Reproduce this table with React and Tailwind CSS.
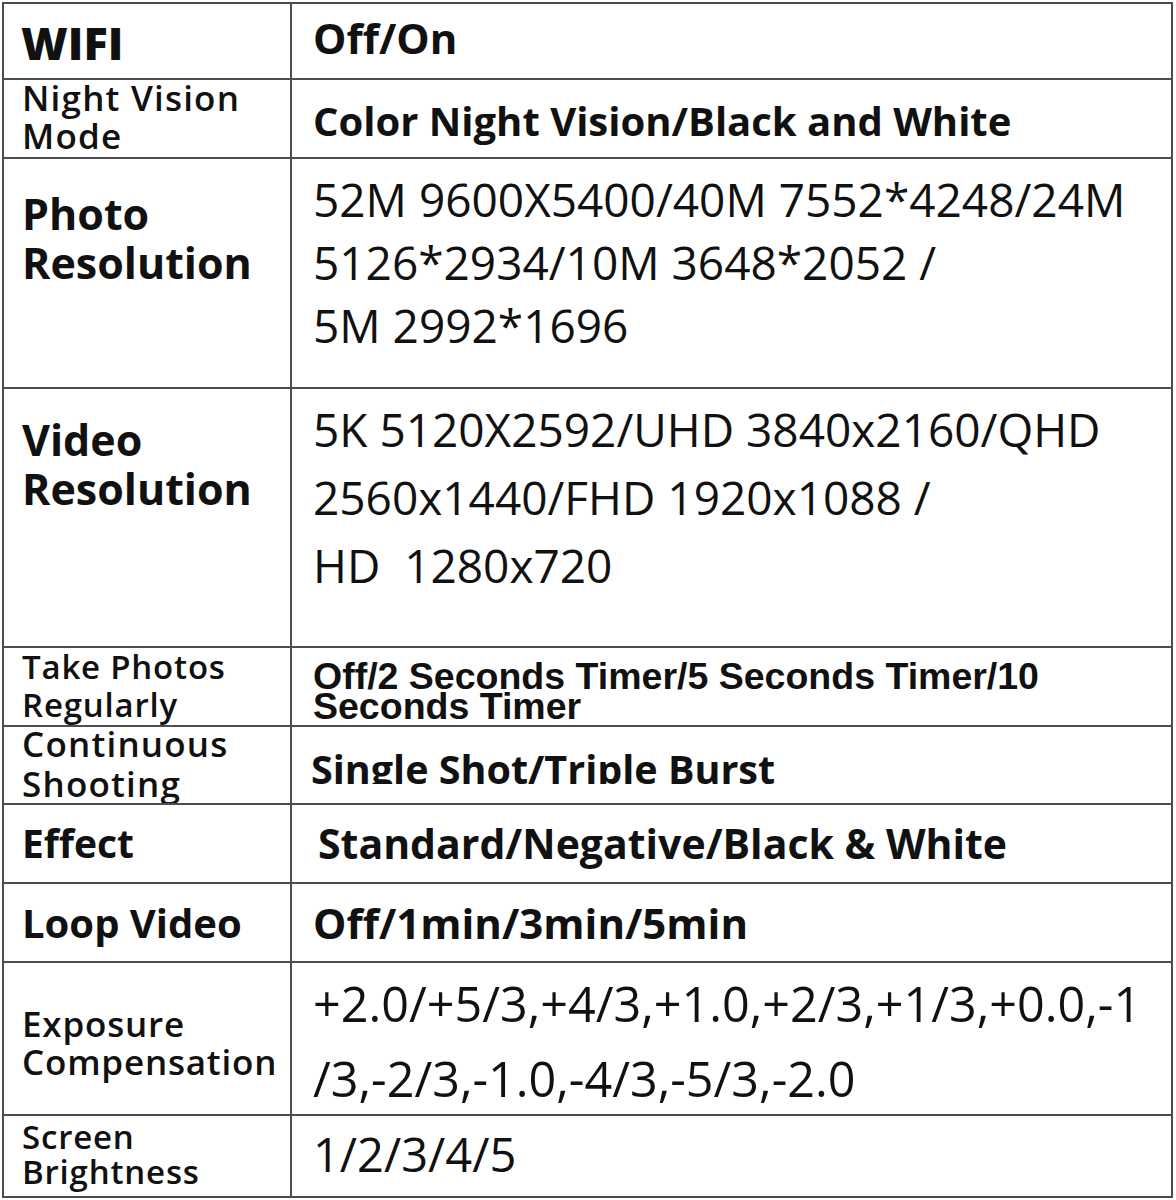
export default function App() {
  const os = { fontFamily: '"Open Sans", "Noto Sans", sans-serif' };
  const ar = { fontFamily: '"Liberation Sans", Arial, sans-serif' };
  return (
    <div className="w-[1176px] h-[1200px] bg-white pt-[2px] pl-[2px] text-[#111111]" style={os}>
      <div className="w-[1171px] border-t-2 border-l-2 border-r-2 border-[#4d4d4d]">
        {/* WIFI */}
        <div className="flex h-[76px] border-b-2 border-[#4d4d4d]">
          <div className="w-[288px] shrink-0 border-r-2 border-[#4d4d4d] flex items-center pl-[17px] pt-[2px]">
            <span className="text-[45px] font-extrabold leading-none">WIFI</span>
          </div>
          <div className="flex-1 flex items-center pl-[21px] pb-[6px]">
            <span className="text-[42px] font-bold leading-none">Off/On</span>
          </div>
        </div>
        {/* Night Vision */}
        <div className="flex h-[79px] border-b-2 border-[#4d4d4d]">
          <div className="w-[288px] shrink-0 border-r-2 border-[#4d4d4d] flex flex-col justify-center pl-[18px] pb-[4px]">
            <span className="text-[35px] font-semibold leading-[38px] tracking-[1.2px]">Night Vision</span>
            <span className="text-[35px] font-semibold leading-[38px] tracking-[1.2px]">Mode</span>
          </div>
          <div className="flex-1 flex items-center pl-[21px] pt-[4px]">
            <span className="text-[40px] font-bold leading-none">Color Night Vision/Black and White</span>
          </div>
        </div>
        {/* Photo Resolution */}
        <div className="flex h-[230px] border-b-2 border-[#4d4d4d]">
          <div className="w-[288px] shrink-0 border-r-2 border-[#4d4d4d] flex flex-col pl-[18px] pt-[30px]">
            <span className="text-[43px] font-bold leading-[49px]">Photo</span>
            <span className="text-[43px] font-bold leading-[49px]">Resolution</span>
          </div>
          <div className="flex-1 flex flex-col pl-[21px] pt-[9px]">
            <span className="text-[46px] leading-[63px]">52M 9600X5400/40M 7552*4248/24M</span>
            <span className="text-[46px] leading-[63px]">5126*2934/10M 3648*2052 /</span>
            <span className="text-[46px] leading-[63px]">5M 2992*1696</span>
          </div>
        </div>
        {/* Video Resolution */}
        <div className="flex h-[259px] border-b-2 border-[#4d4d4d]">
          <div className="w-[288px] shrink-0 border-r-2 border-[#4d4d4d] flex flex-col pl-[18px] pt-[26px]">
            <span className="text-[43px] font-bold leading-[49px]">Video</span>
            <span className="text-[43px] font-bold leading-[49px]">Resolution</span>
          </div>
          <div className="flex-1 flex flex-col pl-[21px] pt-[6px]">
            <span className="text-[46px] leading-[68px]">5K 5120X2592/UHD 3840x2160/QHD</span>
            <span className="text-[46px] leading-[68px]">2560x1440/FHD 1920x1088 /</span>
            <span className="text-[46px] leading-[68px] whitespace-pre">HD  1280x720</span>
          </div>
        </div>
        {/* Take Photos Regularly */}
        <div className="flex h-[79px] border-b-2 border-[#4d4d4d]">
          <div className="w-[288px] shrink-0 border-r-2 border-[#4d4d4d] flex flex-col justify-center pl-[18px] pb-[2px]">
            <span className="text-[33px] font-semibold leading-[38px] tracking-[0.8px]">Take Photos</span>
            <span className="text-[33px] font-semibold leading-[38px] tracking-[0.8px]">Regularly</span>
          </div>
          <div className="flex-1 flex flex-col pl-[21px] pt-[13px]" style={ar}>
            <span className="text-[37.5px] font-bold leading-[30px]">Off/2 Seconds Timer/5 Seconds Timer/10</span>
            <span className="text-[37.5px] font-bold leading-[30px]">Seconds Timer</span>
          </div>
        </div>
        {/* Continuous Shooting */}
        <div className="flex h-[78px] border-b-2 border-[#4d4d4d]">
          <div className="w-[288px] shrink-0 border-r-2 border-[#4d4d4d] flex flex-col justify-center pl-[18px] pb-[2px] overflow-hidden">
            <span className="text-[35px] font-semibold leading-[40px] tracking-[1.2px]">Continuous</span>
            <span className="text-[35px] font-semibold leading-[40px] tracking-[1.2px]">Shooting</span>
          </div>
          <div className="flex-1 flex items-start pl-[19px] pt-[20px]">
            <span className="block h-[37px] overflow-hidden text-[39.5px] font-bold leading-[44px]">Single Shot/Triple Burst</span>
          </div>
        </div>
        {/* Effect */}
        <div className="flex h-[79px] border-b-2 border-[#4d4d4d]">
          <div className="w-[288px] shrink-0 border-r-2 border-[#4d4d4d] flex items-center pl-[18px] pb-[2px]">
            <span className="text-[39px] font-bold leading-none">Effect</span>
          </div>
          <div className="flex-1 flex items-center pl-[26px]">
            <span className="text-[41px] font-bold leading-none">Standard/Negative/Black &amp; White</span>
          </div>
        </div>
        {/* Loop Video */}
        <div className="flex h-[79px] border-b-2 border-[#4d4d4d]">
          <div className="w-[288px] shrink-0 border-r-2 border-[#4d4d4d] flex items-center pl-[18px]">
            <span className="text-[40px] font-bold leading-none">Loop Video</span>
          </div>
          <div className="flex-1 flex items-center pl-[21px]">
            <span className="text-[42px] font-bold leading-none">Off/1min/3min/5min</span>
          </div>
        </div>
        {/* Exposure Compensation */}
        <div className="flex h-[153px] border-b-2 border-[#4d4d4d]">
          <div className="w-[288px] shrink-0 border-r-2 border-[#4d4d4d] flex flex-col justify-center pl-[18px] pt-[8px]">
            <span className="text-[35px] font-semibold leading-[38px] tracking-[0.8px]">Exposure</span>
            <span className="text-[35px] font-semibold leading-[38px] tracking-[0.8px]">Compensation</span>
          </div>
          <div className="flex-1 flex flex-col pl-[21px] pt-[3px]">
            <span className="text-[48.5px] leading-[75px]">+2.0/+5/3,+4/3,+1.0,+2/3,+1/3,+0.0,-1</span>
            <span className="text-[48.5px] leading-[75px]">/3,-2/3,-1.0,-4/3,-5/3,-2.0</span>
          </div>
        </div>
        {/* Screen Brightness */}
        <div className="flex h-[82px] border-b-2 border-[#4d4d4d]">
          <div className="w-[288px] shrink-0 border-r-2 border-[#4d4d4d] flex flex-col justify-center pl-[18px] pb-[4px]">
            <span className="text-[33px] font-semibold leading-[35px] tracking-[0.8px]">Screen</span>
            <span className="text-[33px] font-semibold leading-[35px] tracking-[0.8px]">Brightness</span>
          </div>
          <div className="flex-1 flex items-center pl-[21px] pb-[4px]">
            <span className="text-[47px] leading-none">1/2/3/4/5</span>
          </div>
        </div>
      </div>
    </div>
  );
}
